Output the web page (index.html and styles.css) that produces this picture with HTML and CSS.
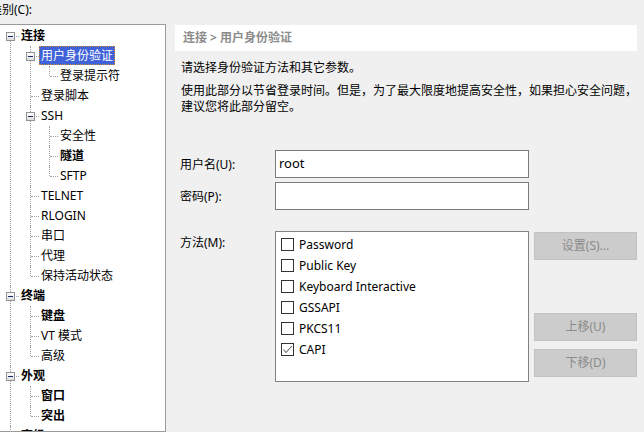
FILE: index.html
```html
<!DOCTYPE html>
<html lang="zh-CN">
<head>
<meta charset="utf-8">
<title>会话属性 - 用户身份验证</title>
<link rel="stylesheet" href="styles.css">
</head>
<body>
<div class="dlg">
  <div class="left">
    <div class="cat-label">类别(C):</div>
    <div class="tree-box">
      <ul class="tree">
        <li><div class="row"><span class="exp"></span><span class="lbl b">连接</span></div>
          <ul>
            <li><div class="row"><span class="exp"></span><span class="lbl sel">用户身份验证</span></div>
              <ul>
                <li><div class="row"><span class="lbl">登录提示符</span></div></li>
              </ul>
            </li>
            <li><div class="row"><span class="lbl">登录脚本</span></div></li>
            <li><div class="row"><span class="exp"></span><span class="lbl">SSH</span></div>
              <ul>
                <li><div class="row"><span class="lbl">安全性</span></div></li>
                <li><div class="row"><span class="lbl b">隧道</span></div></li>
                <li><div class="row"><span class="lbl">SFTP</span></div></li>
              </ul>
            </li>
            <li><div class="row"><span class="lbl">TELNET</span></div></li>
            <li><div class="row"><span class="lbl">RLOGIN</span></div></li>
            <li><div class="row"><span class="lbl">串口</span></div></li>
            <li><div class="row"><span class="lbl">代理</span></div></li>
            <li><div class="row"><span class="lbl">保持活动状态</span></div></li>
          </ul>
        </li>
        <li><div class="row"><span class="exp"></span><span class="lbl b">终端</span></div>
          <ul>
            <li><div class="row"><span class="lbl b">键盘</span></div></li>
            <li><div class="row"><span class="lbl">VT 模式</span></div></li>
            <li><div class="row"><span class="lbl">高级</span></div></li>
          </ul>
        </li>
        <li><div class="row"><span class="exp"></span><span class="lbl b">外观</span></div>
          <ul>
            <li><div class="row"><span class="lbl b">窗口</span></div></li>
            <li><div class="row"><span class="lbl b">突出</span></div></li>
          </ul>
        </li>
        <li><div class="row"><span class="exp"></span><span class="lbl b">高级</span></div></li>
      </ul>
    </div>
  </div>

  <div class="right">
    <div class="crumb">连接 &gt; 用户身份验证</div>
    <p class="intro">请选择身份验证方法和其它参数。</p>
    <p class="intro intro2">使用此部分以节省登录时间。但是，为了最大限度地提高安全性，如果担心安全问题，建议您将此部分留空。</p>

    <div class="field first">
      <label class="flabel">用户名(U):</label>
      <div class="input">root</div>
    </div>
    <div class="field">
      <label class="flabel">密码(P):</label>
      <div class="input"></div>
    </div>

    <div class="field method">
      <label class="flabel top">方法(M):</label>
      <div class="list">
        <div class="item"><span class="cb"></span>Password</div>
        <div class="item"><span class="cb"></span>Public Key</div>
        <div class="item"><span class="cb"></span>Keyboard Interactive</div>
        <div class="item"><span class="cb"></span>GSSAPI</div>
        <div class="item"><span class="cb"></span>PKCS11</div>
        <div class="item"><span class="cb checked"><svg width="11" height="11" viewBox="0 0 11 11"><polyline points="1.5,5.5 4,8.5 10,2" fill="none" stroke="#6a6a6a" stroke-width="1.1"/></svg></span>CAPI</div>
      </div>
      <div class="btns">
        <div class="btn">设置(S)...</div>
        <div class="btn up">上移(U)</div>
        <div class="btn">下移(D)</div>
      </div>
    </div>
  </div>
</div>
</body>
</html>
```

FILE: styles.css
```css
html, body {
  margin: 0;
  padding: 0;
  height: 432px;
  overflow: hidden;
  background: #f0f0f0;
}
body {
  font-family: "Noto Sans", "Noto Sans CJK SC", sans-serif;
  font-size: 12px;
  color: #000;
}
.dlg {
  display: flex;
  margin-left: -10px;
  height: 432px;
}
.left {
  width: 176px;
  display: flex;
  flex-direction: column;
}
.cat-label {
  height: 25px;
  line-height: 20px;
  white-space: nowrap;
}
.tree-box {
  height: 420px;
  border: 1px solid #9a9a9a;
  background: #fff;
  padding: 1px 0 0 9px;
  overflow: hidden;
  box-sizing: border-box;
}
.tree, .tree ul {
  list-style: none;
  margin: 0;
  padding: 0;
}
.tree ul { margin-left: 20px; }
.tree ul ul { margin-left: 19px; }
.tree li { position: relative; }
.tree li::before {
  content: "";
  position: absolute;
  left: 10px;
  top: 0;
  bottom: 0;
  border-left: 1px dotted #a0a0a0;
}
.tree li:last-child::before { bottom: auto; height: 10px; }
.tree > li:first-child::before { top: 10px; }
.row {
  position: relative;
  height: 20px;
  line-height: 20px;
  padding-left: 21px;
  white-space: nowrap;
}
.row::before {
  content: "";
  position: absolute;
  left: 11px;
  top: 10px;
  width: 8px;
  border-top: 1px dotted #a0a0a0;
}
.exp {
  position: absolute;
  left: 6px;
  top: 6px;
  width: 9px;
  height: 9px;
  box-sizing: border-box;
  border: 1px solid #939393;
  background: linear-gradient(#ffffff, #dedede);
  z-index: 1;
}
.exp::after {
  content: "";
  position: absolute;
  left: 1px;
  top: 3px;
  width: 5px;
  height: 1px;
  background: #1c2a6c;
}
.lbl { position: relative; z-index: 1; }
.b { font-weight: bold; }
.sel {
  display: inline-block;
  height: 19px;
  line-height: 17px;
  margin-left: -2px;
  padding: 0 1px;
  box-sizing: border-box;
  border: 1px dotted #d08a2a;
  background: #3f62d8;
  color: #fff;
  vertical-align: top;
}

.right {
  width: 462px;
  margin-left: 9px;
  padding-top: 25px;
}
.crumb {
  height: 26px;
  line-height: 26px;
  background: #fff;
  padding-left: 8px;
  color: #8c8c8c;
  font-weight: bold;
}
.intro {
  margin: 9px 0 0 6px;
  line-height: 16px;
}
.intro2 { margin-top: 7px; }

.field {
  display: flex;
  align-items: center;
  margin-top: 4px;
  padding-left: 5px;
}
.field.first { margin-top: 35px; }
.flabel { width: 95px; }
.input {
  width: 254px;
  height: 28px;
  box-sizing: border-box;
  border: 1px solid #7a7a7a;
  background: #fff;
  padding-left: 3px;
  line-height: 25px;
  font-size: 13px;
}
.field.method {
  align-items: flex-start;
  margin-top: 21px;
}
.flabel.top { padding-top: 2px; line-height: 20px; }
.list {
  width: 254px;
  height: 151px;
  box-sizing: border-box;
  border: 1px solid #828282;
  background: #fff;
  padding: 2px 0 0 5px;
}
.item {
  height: 21px;
  display: flex;
  align-items: center;
  white-space: nowrap;
}
.cb {
  width: 13px;
  height: 13px;
  box-sizing: border-box;
  border: 1px solid #333;
  background: #fff;
  margin-right: 5px;
  display: flex;
  align-items: center;
  justify-content: center;
}
.btns {
  margin-left: 5px;
  padding-top: 1px;
  display: flex;
  flex-direction: column;
  gap: 8px;
}
.btn {
  width: 103px;
  height: 28px;
  box-sizing: border-box;
  border: 1px solid #c2c2c2;
  background: #cccccc;
  color: #8a8a8a;
  text-align: center;
  line-height: 26px;
}
.btn.up { margin-top: 45px; }
```
